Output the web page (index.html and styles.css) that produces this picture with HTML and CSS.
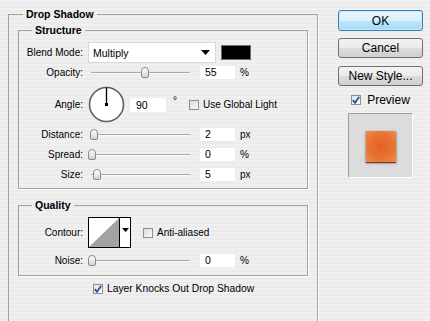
FILE: index.html
```html
<!DOCTYPE html>
<html>
<head>
<meta charset="utf-8">
<link rel="stylesheet" href="styles.css">
</head>
<body>
<div class="dialog">
  <div class="main">
    <fieldset class="outer">
      <legend class="lg-outer">Drop Shadow</legend>

      <fieldset class="group structure">
        <legend class="lg-inner">Structure</legend>

        <div class="row r-blend">
          <span class="lbl">Blend Mode:</span>
          <div class="select">
            <span>Multiply</span>
            <svg class="arrow" width="9" height="5" viewBox="0 0 9 5"><path d="M0 0H9L4.5 5Z" fill="#000"/></svg>
          </div>
          <div class="swatch"></div>
        </div>

        <div class="row r-opacity">
          <span class="lbl">Opacity:</span>
          <div class="slider"><div class="track"></div><div class="thumb" style="left:53px"></div></div>
          <div class="num">55</div>
          <span class="unit">%</span>
        </div>

        <div class="row r-angle">
          <span class="lbl">Angle:</span>
          <svg class="dial" width="37" height="37" viewBox="0 0 37 37">
            <circle cx="18.5" cy="18.5" r="17" fill="#fff" stroke="#5a5f6e" stroke-width="1.6"/>
            <line x1="18.5" y1="18.5" x2="18.5" y2="1.5" stroke="#000" stroke-width="1.3"/>
            <rect x="17" y="17" width="3" height="3" fill="#000"/>
          </svg>
          <div class="num num-angle">90</div>
          <span class="deg">°</span>
          <span class="cb cb-global"></span>
          <span class="cbtext">Use Global Light</span>
        </div>

        <div class="row r-dist">
          <span class="lbl">Distance:</span>
          <div class="slider"><div class="track"></div><div class="thumb" style="left:2px"></div></div>
          <div class="num">2</div>
          <span class="unit">px</span>
        </div>

        <div class="row r-spread">
          <span class="lbl">Spread:</span>
          <div class="slider"><div class="track"></div><div class="thumb" style="left:0px"></div></div>
          <div class="num">0</div>
          <span class="unit">%</span>
        </div>

        <div class="row r-size">
          <span class="lbl">Size:</span>
          <div class="slider"><div class="track"></div><div class="thumb" style="left:5px"></div></div>
          <div class="num">5</div>
          <span class="unit">px</span>
        </div>
      </fieldset>

      <fieldset class="group quality">
        <legend class="lg-inner">Quality</legend>

        <div class="row r-contour">
          <span class="lbl">Contour:</span>
          <div class="contour">
            <svg class="curve" width="30" height="29" viewBox="0 0 30 29"><path d="M0 29L30 0V29Z" fill="#a3a3a3"/></svg>
            <div class="cdrop"><svg width="7" height="4" viewBox="0 0 7 4"><path d="M0 0H7L3.5 4Z" fill="#000"/></svg></div>
          </div>
          <span class="cb cb-anti"></span>
          <span class="cbtext">Anti-aliased</span>
        </div>

        <div class="row r-noise">
          <span class="lbl">Noise:</span>
          <div class="slider"><div class="track"></div><div class="thumb" style="left:0px"></div></div>
          <div class="num">0</div>
          <span class="unit">%</span>
        </div>
      </fieldset>

      <div class="row r-knock">
        <span class="cb checked">
          <svg width="8" height="8" viewBox="0 0 8 8"><path d="M0.8 4.2L3 6.8L7.2 0.8" fill="none" stroke="#2a4fa8" stroke-width="1.8"/></svg>
        </span>
        <span class="cbtext">Layer Knocks Out Drop Shadow</span>
      </div>
    </fieldset>
  </div>

  <div class="side">
    <div class="btn btn-ok">OK</div>
    <div class="btn">Cancel</div>
    <div class="btn">New Style...</div>
    <div class="preview-row">
      <span class="cb checked">
        <svg width="8" height="8" viewBox="0 0 8 8"><path d="M0.8 4.2L3 6.8L7.2 0.8" fill="none" stroke="#2a4fa8" stroke-width="1.8"/></svg>
      </span>
      <span class="ptext">Preview</span>
    </div>
    <div class="preview">
      <div class="square"></div>
    </div>
  </div>
</div>
</body>
</html>
```

FILE: styles.css
```css
html, body {
  margin: 0;
  padding: 0;
  width: 430px;
  height: 321px;
  overflow: hidden;
}

body {
  background-color: #efefef;
  background-image: repeating-linear-gradient(to bottom, #f0f0f0 0, #f0f0f0 2px, #ebebeb 2px, #ebebeb 4px);
  font-family: "Liberation Sans", Arial, sans-serif;
  font-size: 10px;
  color: #000;
}

.dialog {
  display: flex;
  align-items: flex-start;
}

.main {
  width: 318px;
  flex: none;
}

fieldset {
  margin: 0;
  padding: 0;
  min-width: 0;
  border: 1px solid #a2a2a2;
  box-shadow: 1px 1px 0 #ffffff;
}

legend {
  padding: 0 3px;
  font-weight: bold;
  line-height: 13px;
}

.outer {
  margin: 8px 0 0 8px;
  height: 316px;
  box-sizing: border-box;
}

.lg-outer {
  margin-left: 14px;
  font-size: 10.5px;
}

.group {
  margin: 3px 9px 0 9px;
}

.lg-inner {
  margin-left: 13px;
  font-size: 10.5px;
}

.structure {
  padding: 5px 0 6px 0;
}

.quality {
  margin-top: 10px;
  padding: 5px 0 7px 0;
}

.row {
  display: flex;
  align-items: center;
}

.lbl {
  width: 64px;
  flex: none;
  text-align: right;
  margin-right: 5px;
}

.r-blend { height: 21px; }
.r-opacity { height: 15px; margin-top: 2px; }
.r-angle { height: 37px; margin-top: 6px; }
.r-dist { height: 15px; margin-top: 4px; }
.r-spread { height: 15px; margin-top: 5px; }
.r-size { height: 15px; margin-top: 5px; }
.r-contour { height: 31px; }
.r-noise { height: 15px; margin-top: 5px; }
.r-knock { height: 13px; margin-top: 6px; padding-left: 84px; }

.select {
  width: 128px;
  height: 21px;
  box-sizing: border-box;
  background: #fff;
  border: 1px solid #d8d8d8;
  display: flex;
  align-items: center;
  justify-content: space-between;
  padding: 0 5px 0 4px;
  font-size: 10.5px;
}

.swatch {
  width: 30px;
  height: 15px;
  box-sizing: border-box;
  margin-left: 5px;
  background: #000;
  border: 1px solid #6e6e6e;
}

.slider {
  position: relative;
  width: 104px;
  height: 15px;
  flex: none;
}

.track {
  position: absolute;
  left: 3px;
  right: 2px;
  top: 7px;
  height: 1px;
  background: #a8a8a8;
  border-bottom: 1px solid #fbfbfb;
}

.thumb {
  position: absolute;
  top: 2px;
  width: 8px;
  height: 11px;
  box-sizing: border-box;
  border: 1px solid #8a8a8a;
  border-radius: 4px 4px 2px 2px;
  background: linear-gradient(to bottom, #ffffff, #d4d4d4);
}

.num {
  width: 37px;
  height: 15px;
  box-sizing: border-box;
  margin-left: 7px;
  background: #fff;
  border: 1px solid #ececec;
  padding-left: 5px;
  line-height: 13px;
  font-size: 10.5px;
}

.unit {
  margin-left: 4px;
  font-size: 10px;
}

.dial {
  flex: none;
  display: block;
}

.num-angle {
  margin-left: 4px;
  width: 38px;
  height: 16px;
  line-height: 14px;
  padding-left: 6px;
}

.deg {
  margin-left: 6px;
  align-self: flex-start;
  margin-top: 9px;
  font-size: 10px;
}

.cb {
  width: 10px;
  height: 10px;
  box-sizing: border-box;
  flex: none;
  border: 1px solid #8e8f8f;
  background: linear-gradient(135deg, #dcdcdc, #f8f8f8);
  display: flex;
  align-items: center;
  justify-content: center;
}

.cb.checked {
  background: linear-gradient(135deg, #e2e2e2, #fbfbfb);
}

.cb-global {
  margin-left: 12px;
}

.cbtext {
  margin-left: 4px;
}

.r-knock .cbtext {
  font-size: 10.3px;
}

.contour {
  width: 43px;
  height: 31px;
  box-sizing: border-box;
  border: 1px solid #000;
  background: #fff;
  display: flex;
}

.curve {
  display: block;
  flex: none;
}

.cdrop {
  flex: 1;
  border-left: 1px solid #000;
  display: flex;
  justify-content: center;
  padding-top: 10px;
  box-sizing: border-box;
}

.cdrop svg {
  display: block;
}

.cb-anti {
  margin-left: 12px;
}

.side {
  margin-left: 20px;
  width: 85px;
  flex: none;
  display: flex;
  flex-direction: column;
  align-items: center;
  padding-top: 10px;
  font-size: 12px;
}

.btn {
  width: 85px;
  height: 20px;
  box-sizing: border-box;
  border: 1px solid #707070;
  border-radius: 3px;
  background: linear-gradient(to bottom, #f2f2f2 0, #ebebeb 50%, #dddddd 51%, #cfcfcf 100%);
  display: flex;
  align-items: center;
  justify-content: center;
  margin-bottom: 8px;
}

.btn-ok {
  height: 21px;
  margin-bottom: 7px;
  border-color: #3c7fb1;
  background: linear-gradient(to bottom, #eaf6fd 0, #d9f0fc 50%, #bee6fd 51%, #a7d9f5 100%);
  box-shadow: inset 0 0 0 1px #c6e9fb;
}

.preview-row {
  display: flex;
  align-items: center;
  height: 13px;
  margin-top: -1px;
}

.ptext {
  margin-left: 6px;
}

.preview {
  margin-top: 7px;
  width: 65px;
  height: 65px;
  box-sizing: border-box;
  background: #dcdcdc;
  border-top: 1px solid #9f9f9f;
  border-left: 1px solid #9f9f9f;
  border-right: 1px solid #ffffff;
  border-bottom: 1px solid #ffffff;
  display: flex;
  align-items: center;
  justify-content: center;
}

.square {
  width: 30px;
  height: 31px;
  margin-top: 2px;
  background: radial-gradient(circle at 50% 50%, #e4621f 0, #ea7434 60%, #f08c55 100%);
  box-shadow: 0 1px 1px rgba(90, 40, 10, 0.8), 0 1px 3px rgba(0, 0, 0, 0.35);
}
```
